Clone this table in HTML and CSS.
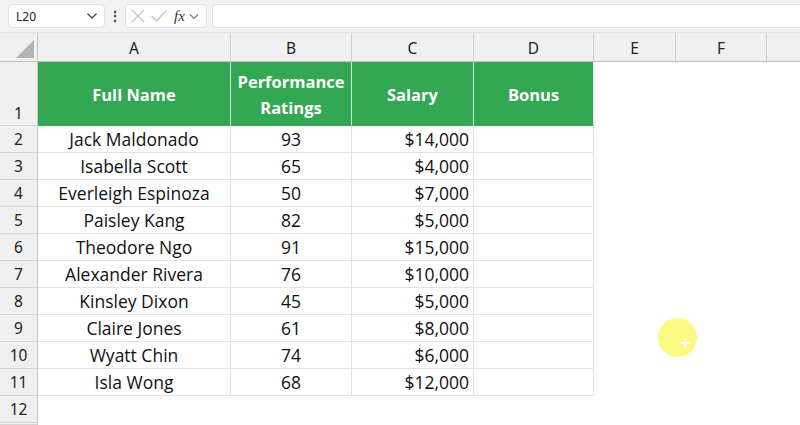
FILE: index.html
```html
<!DOCTYPE html>
<html>
<head>
<meta charset="utf-8">
<link rel="stylesheet" href="styles.css">
</head>
<body>
<div class="app">
  <div class="fbar">
    <div class="namebox"><span>L20</span><svg width="12" height="8" viewBox="0 0 12 8"><path d="M1.5 1.5 L6 6 L10.5 1.5" fill="none" stroke="#444" stroke-width="1.3"/></svg></div>
    <div class="dots">⋮</div>
    <div class="fxbox">
      <svg width="16" height="16" viewBox="0 0 16 16"><path d="M2 2 L14 14 M14 2 L2 14" stroke="#c4c4c4" stroke-width="1.3"/></svg>
      <svg width="18" height="16" viewBox="0 0 18 16"><path d="M1.5 8 L6.5 13 L16.5 2.5" fill="none" stroke="#c4c4c4" stroke-width="1.3"/></svg>
      <span class="fx">fx</span>
      <svg width="10" height="7" viewBox="0 0 10 7"><path d="M1 1.5 L5 5.5 L9 1.5" fill="none" stroke="#777" stroke-width="1.1"/></svg>
    </div>
    <div class="finput"></div>
  </div>
  <div class="sheet">
    <div class="corner"><div class="tri"></div></div>
    <div class="ch">A</div><div class="ch">B</div><div class="ch">C</div><div class="ch">D</div><div class="ch">E</div><div class="ch">F</div><div class="ch last"></div>

    <div class="rh r1">1</div>
    <div class="hd">Full Name</div><div class="hd">Performance<br>Ratings</div><div class="hd">Salary</div><div class="hd">Bonus</div><div class="e"></div><div class="e"></div><div class="e"></div>

    <div class="rh">2</div><div class="c ctr">Jack Maldonado</div><div class="c ctr">93</div><div class="c rt">$14,000</div><div class="c"></div><div class="e"></div><div class="e"></div><div class="e"></div>
    <div class="rh">3</div><div class="c ctr">Isabella Scott</div><div class="c ctr">65</div><div class="c rt">$4,000</div><div class="c"></div><div class="e"></div><div class="e"></div><div class="e"></div>
    <div class="rh">4</div><div class="c ctr">Everleigh Espinoza</div><div class="c ctr">50</div><div class="c rt">$7,000</div><div class="c"></div><div class="e"></div><div class="e"></div><div class="e"></div>
    <div class="rh">5</div><div class="c ctr">Paisley Kang</div><div class="c ctr">82</div><div class="c rt">$5,000</div><div class="c"></div><div class="e"></div><div class="e"></div><div class="e"></div>
    <div class="rh">6</div><div class="c ctr">Theodore Ngo</div><div class="c ctr">91</div><div class="c rt">$15,000</div><div class="c"></div><div class="e"></div><div class="e"></div><div class="e"></div>
    <div class="rh">7</div><div class="c ctr">Alexander Rivera</div><div class="c ctr">76</div><div class="c rt">$10,000</div><div class="c"></div><div class="e"></div><div class="e"></div><div class="e"></div>
    <div class="rh">8</div><div class="c ctr">Kinsley Dixon</div><div class="c ctr">45</div><div class="c rt">$5,000</div><div class="c"></div><div class="e"></div><div class="e"></div><div class="e"></div>
    <div class="rh">9</div><div class="c ctr">Claire Jones</div><div class="c ctr">61</div><div class="c rt">$8,000</div><div class="c"></div><div class="e"></div><div class="e"></div><div class="e"></div>
    <div class="rh">10</div><div class="c ctr">Wyatt Chin</div><div class="c ctr">74</div><div class="c rt">$6,000</div><div class="c"></div><div class="e"></div><div class="e"></div><div class="e"></div>
    <div class="rh">11</div><div class="c ctr">Isla Wong</div><div class="c ctr">68</div><div class="c rt">$12,000</div><div class="c"></div><div class="e"></div><div class="e"></div><div class="e"></div>
    <div class="rh">12</div><div class="e"></div><div class="e"></div><div class="e"></div><div class="e"></div><div class="e"></div><div class="e"></div><div class="e"></div>
    <div class="rh"></div>

    <div class="cursor"><span class="plus">+</span></div>
  </div>
</div>
</body>
</html>
```
FILE: styles.css
```css
* { box-sizing: border-box; }
html, body { margin: 0; padding: 0; }
body { width: 800px; height: 425px; overflow: hidden; background: #fff; font-family: "Open Sans", "Noto Sans", sans-serif; }
.app { width: 800px; height: 425px; display: flex; flex-direction: column; }

.fbar { height: 33px; background: #f3f3f3; display: flex; align-items: flex-start; padding: 4px 0 0 8px; gap: 0; border-bottom: 1px solid #e4e4e4; }
.namebox { width: 97px; height: 24px; background: #fff; border: 1px solid #e2e2e2; border-radius: 4px; display: flex; align-items: center; justify-content: space-between; padding: 0 6px 0 7px; font-family: "Noto Sans", sans-serif; font-size: 12px; color: #222; }
.dots { width: 20px; text-align: center; font-size: 14px; line-height: 24px; color: #444; font-weight: bold; }
.fxbox { width: 82px; height: 24px; background: #fff; border: 1px solid #e2e2e2; border-radius: 4px; display: flex; align-items: center; padding: 0 3px 0 4px; gap: 4px; }
.fx { font-family: "Liberation Serif", serif; font-style: italic; font-size: 15px; color: #333; margin-left: 2px; }
.finput { flex: 1; height: 24px; margin-left: 5px; background: #fff; border: 1px solid #e2e2e2; border-right: none; border-radius: 4px 0 0 4px; }

.sheet { position: relative; flex: 1; display: grid; grid-template-columns: 38px 193px 121px 122px 120px 82px 91px 1fr; grid-template-rows: 29px 64px repeat(11, 27px) 1fr; font-family: "Open Sans", "Noto Sans", sans-serif; }

.corner { background: #f0f0f0; border-right: 1px solid #c6c6c6; border-bottom: 1px solid #bdbdbd; position: relative; }
.tri { position: absolute; left: 16px; top: 7px; width: 0; height: 0; border-left: 18px solid transparent; border-bottom: 18px solid #b3b3b3; }
.ch { background: #f0f0f0; border-right: 1px solid #cfcfcf; border-bottom: 1px solid #bdbdbd; display: flex; align-items: center; justify-content: center; font-family: "Noto Sans", sans-serif; font-size: 15.5px; color: #222; padding-top: 2px; }
.ch.last { border-right: none; }

.rh { background: #f0f0f0; border-right: 1px solid #c6c6c6; border-bottom: 1px solid #d4d4d4; display: flex; align-items: center; justify-content: center; font-family: "Noto Sans", sans-serif; font-size: 15.5px; color: #222; }
.rh.r1 { align-items: flex-end; padding-bottom: 1px; }

.hd { background: #33a753; color: #fff; font-weight: 700; font-size: 16.5px; line-height: 26px; display: flex; align-items: center; justify-content: center; text-align: center; border-right: 1px solid #d9ecd9; border-bottom: 1px solid #33a753; padding-top: 2px; }
.c { border-right: 1px solid #e3e3e3; border-bottom: 1px solid #e3e3e3; font-size: 17.5px; color: #111; display: flex; align-items: center; white-space: nowrap; }
.c.ctr { justify-content: center; }
.c.rt { justify-content: flex-end; padding-right: 4px; }
.e { background: #fff; }

.cursor { position: absolute; left: 658px; top: 285px; width: 39px; height: 39px; border-radius: 50%; background: #fbfb83; }
.plus { position: absolute; left: 21px; top: 18px; color: #fff; font-weight: 700; font-size: 15px; line-height: 15px; font-family: "DejaVu Sans", sans-serif; }
```
